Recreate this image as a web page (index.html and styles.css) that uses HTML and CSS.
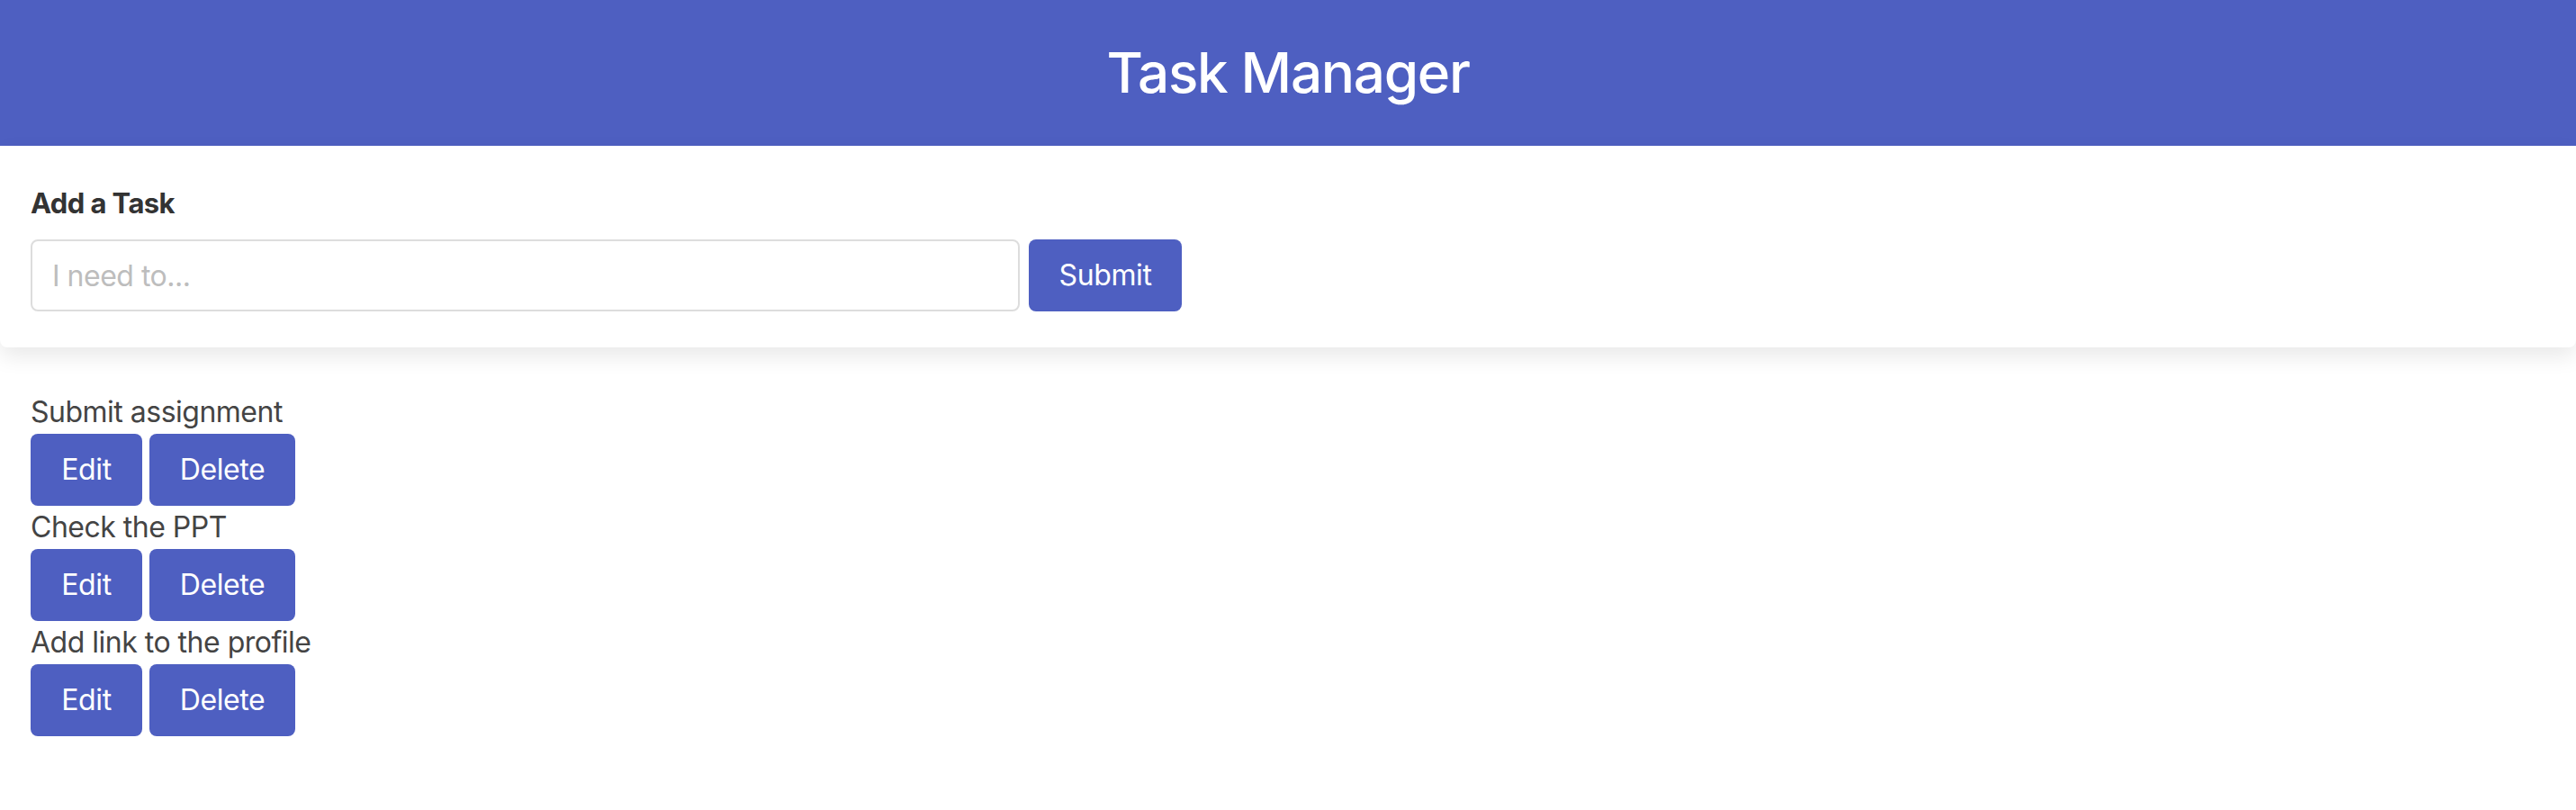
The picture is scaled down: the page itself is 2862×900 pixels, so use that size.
FILE: index.html
```html
<!DOCTYPE html>
<html>
<head>
<meta charset="utf-8">
<title>Task Manager</title>
<link rel="stylesheet" href="styles.css">
</head>
<body>
<header class="app-header">
  <h1 class="app-title">Task Manager</h1>
</header>
<section class="add-card">
  <label class="add-label" for="task">Add a Task</label>
  <form class="add-form">
    <input id="task" class="add-input" type="text" placeholder="I need to...">
    <button type="button" class="btn btn-submit">Submit</button>
  </form>
</section>
<ul class="task-list">
  <li class="task">
    <div class="task-name">Submit assignment</div>
    <div class="task-actions"><button class="btn btn-edit">Edit</button><button class="btn btn-delete">Delete</button></div>
  </li>
  <li class="task">
    <div class="task-name">Check the PPT</div>
    <div class="task-actions"><button class="btn btn-edit">Edit</button><button class="btn btn-delete">Delete</button></div>
  </li>
  <li class="task">
    <div class="task-name">Add link to the profile</div>
    <div class="task-actions"><button class="btn btn-edit">Edit</button><button class="btn btn-delete">Delete</button></div>
  </li>
</ul>
</body>
</html>
```
FILE: styles.css
```css
* { box-sizing: border-box; }
html, body {
  margin: 0;
  padding: 0;
  background: #ffffff;
  font-family: Inter, "Noto Sans", "Liberation Sans", sans-serif;
  color: #444444;
  font-size: 32px;
  line-height: 48px;
  letter-spacing: -0.5px;
}
.app-header {
  background: #4e5fc1;
  height: 162px;
  display: flex;
  align-items: center;
  justify-content: center;
}
.app-title {
  margin: 0;
  color: #ffffff;
  font-size: 62px;
  font-weight: 500;
  line-height: 1;
  letter-spacing: -1.3px;
}
.add-card {
  background: #ffffff;
  padding: 40px 34px 40px 34px;
  border-radius: 0 0 8px 8px;
  box-shadow: 0 10px 24px rgba(0, 0, 0, 0.09);
  display: flex;
  flex-direction: column;
  gap: 16px;
  position: relative;
}
.add-label {
  font-weight: 700;
  color: #333333;
  font-size: 31px;
  line-height: 48px;
  letter-spacing: -0.6px;
}
.add-form {
  margin: 0;
  display: flex;
  gap: 10px;
}
.add-input {
  width: 1099px;
  height: 80px;
  border: 2px solid #dddddd;
  border-radius: 8px;
  padding: 0 22px;
  font-family: inherit;
  font-size: 32px;
  letter-spacing: -0.5px;
  color: #444444;
  outline: none;
}
.add-input::placeholder { color: #bdbdbd; }
.btn {
  background: #4e5fc1;
  color: #ffffff;
  border: none;
  border-radius: 8px;
  height: 80px;
  padding: 0;
  font-family: inherit;
  font-size: 32px;
  line-height: 48px;
  letter-spacing: -0.4px;
  cursor: pointer;
}
.btn-submit { width: 170px; }
.btn-edit { width: 124px; }
.btn-delete { width: 162px; }
.task-list {
  list-style: none;
  margin: 48px 0 0 0;
  padding: 0 34px;
}
.task-name { height: 48px; }
.task-actions {
  display: flex;
  gap: 8px;
}
```
